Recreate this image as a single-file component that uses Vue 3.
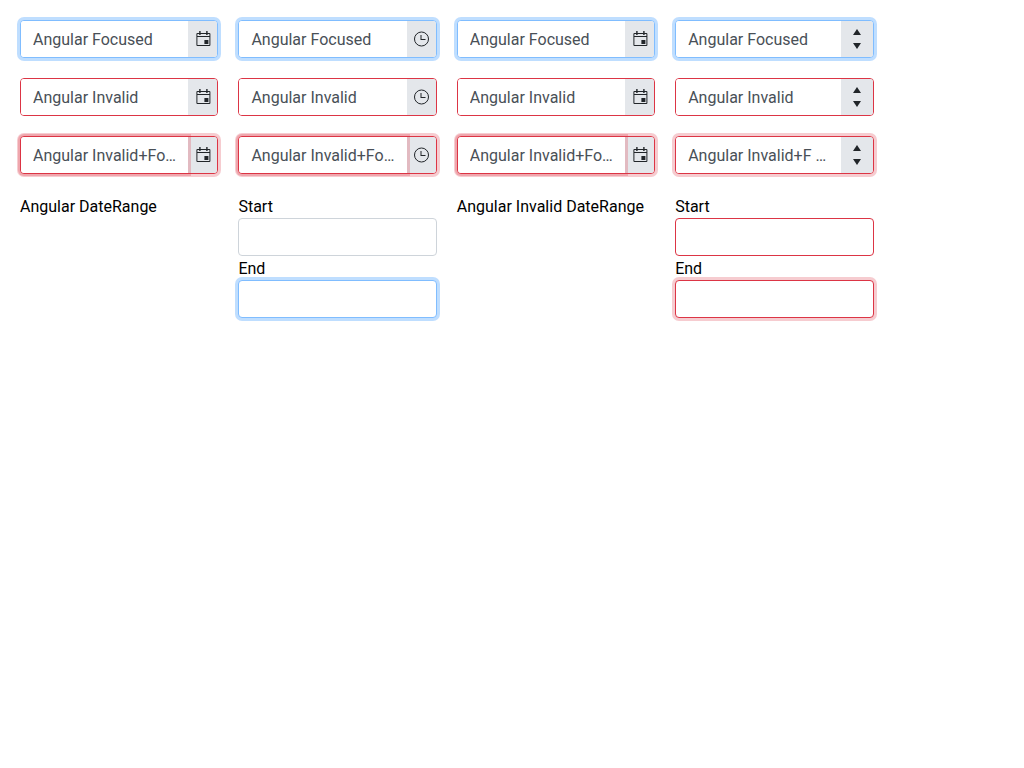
<script setup>
const kinds = [
  { id: 'date', icon: 'calendar', label: 'Date', action: 'Open calendar' },
  { id: 'time', icon: 'clock', label: 'Time', action: 'Open time list' },
  { id: 'datetime', icon: 'calendar', label: 'Date and time', action: 'Open calendar' },
  { id: 'number', icon: 'spin', label: 'Number', action: 'Change value' },
]

const states = [
  { id: 'focused', text: 'Angular Focused', classes: 'is-focused' },
  { id: 'invalid', text: 'Angular Invalid', classes: 'is-invalid' },
  { id: 'both', text: 'Angular Invalid+Focused', numberText: 'Angular Invalid+F ocused', classes: 'is-invalid is-focused' },
]

const ranges = [
  { id: 'valid', title: 'Angular DateRange', classes: '' },
  { id: 'wrong', title: 'Angular Invalid DateRange', classes: 'is-invalid' },
]

function textFor(state, kind) {
  return kind.id === 'number' && state.numberText ? state.numberText : state.text
}
</script>

<template>
  <main class="grid">
    <template v-for="state in states" :key="state.id">
      <div
        v-for="kind in kinds"
        :key="kind.id"
        class="picker"
        :class="[state.classes, kind.icon]"
      >
        <input
          class="picker-input"
          type="text"
          :aria-label="kind.label"
          :value="textFor(state, kind)"
        />
        <span v-if="kind.icon === 'spin'" class="spinner">
          <button type="button" class="spin-button" aria-label="Increase value">
            <svg width="8" height="6" viewBox="0 0 8 6"><path d="M4 0 8 6H0Z" /></svg>
          </button>
          <button type="button" class="spin-button" aria-label="Decrease value">
            <svg width="8" height="6" viewBox="0 0 8 6"><path d="M0 0H8L4 6Z" /></svg>
          </button>
        </span>
        <button v-else type="button" class="picker-button" :aria-label="kind.action">
          <svg v-if="kind.icon === 'calendar'" width="16" height="16" viewBox="-0.4 0 16 16">
            <path
              fill-rule="evenodd"
              d="M3.8 0H5.2V2H10.8V0H12.2V2H14A1 1 0 0 1 15 3V14A1 1 0 0 1 14 15H2A1 1 0 0 1 1 14V3A1 1 0 0 1 2 2H3.8ZM2 3V5H14V3H12.2V4H10.8V3H5.2V4H3.8V3ZM2 6V14H14V6ZM9 9H13V13H9Z"
            />
          </svg>
          <svg v-else width="16" height="16" viewBox="-0.5 0 16 16">
            <circle cx="8" cy="8" r="7" fill="none" stroke="currentColor" />
            <path d="M7 4H8V8H12V9H7Z" />
          </svg>
        </button>
      </div>
    </template>

    <template v-for="range in ranges" :key="range.id">
      <div class="caption">{{ range.title }}</div>
      <div class="range">
        <label class="caption" :for="range.id + '-start'">Start</label>
        <input :id="range.id + '-start'" class="box" :class="range.classes" type="text" />
        <label class="caption" :for="range.id + '-end'">End</label>
        <input :id="range.id + '-end'" class="box is-focused" :class="range.classes" type="text" />
      </div>
    </template>
  </main>
</template>

<style>
body {
  margin: 0;
  background: #fff;
}
</style>

<style scoped>
.grid {
  display: grid;
  grid-template-columns: repeat(4, 20%);
  gap: 20px;
  margin: 20px 12px 20px 20px;
  font: 16px/22px Roboto, sans-serif;
  color: #000;
}

.picker,
.box {
  box-sizing: border-box;
  height: 38px;
  border: 1px solid #ced4da;
  border-radius: 4px;
  background: #fff;
}

.picker {
  display: flex;
}

.is-focused {
  border-color: #80bdff;
  box-shadow: 0 0 0 3px rgba(0, 123, 255, 0.25);
}

.is-invalid {
  border-color: #dc3545;
}

.is-invalid.is-focused {
  box-shadow: 0 0 0 3px rgba(220, 53, 69, 0.25);
}

.picker-input {
  flex: 1;
  min-width: 0;
  box-sizing: border-box;
  margin: 0;
  padding: 2px 12px 0;
  border: 0;
  border-radius: 3px 0 0 3px;
  outline: 0;
  background: #fff;
  color: #495057;
  font: inherit;
  text-overflow: ellipsis;
}

.is-invalid.is-focused:not(.spin) .picker-input {
  z-index: 1;
  box-shadow: 0 0 0 3px rgba(220, 53, 69, 0.25);
}

.picker-button,
.spinner {
  display: flex;
  flex: none;
  align-items: center;
  justify-content: center;
  border-radius: 0 3px 3px 0;
  background: #e4e7eb;
  color: #212529;
}

.picker-button {
  width: 29px;
  padding: 0;
  border: 0;
}

.spinner {
  flex-direction: column;
  width: 32px;
}

.spin-button {
  display: flex;
  align-items: center;
  justify-content: center;
  width: 100%;
  height: 14px;
  padding: 0;
  border: 0;
  background: none;
  color: inherit;
}

svg {
  display: block;
  fill: currentColor;
}

.range {
  display: flex;
  flex-direction: column;
}

.caption {
  padding-top: 2px;
}

.box {
  width: 100%;
  margin: 0;
  padding: 6px 12px;
  outline: 0;
  color: #495057;
  font: inherit;
}
</style>
